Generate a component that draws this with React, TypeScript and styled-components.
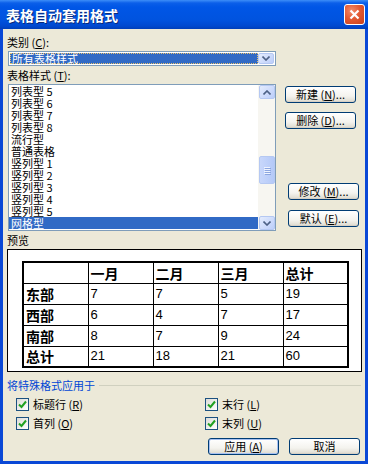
import styled, { createGlobalStyle } from 'styled-components';

const Global = createGlobalStyle`
  html, body { margin: 0; padding: 0; background: #fff; }
  body {
    font-family: "Noto Sans CJK SC", "Noto Sans", sans-serif;
    font-size: 11px;
    color: #000;
  }
`;

const Window = styled.div`
  width: 368px;
  height: 464px;
  display: flex;
  flex-direction: column;
  overflow: hidden;
`;

const TitleBar = styled.div`
  height: 29px;
  flex: none;
  display: flex;
  align-items: center;
  justify-content: space-between;
  padding: 0 3px 0 6px;
  background: linear-gradient(#3d8ef8 0, #0b5fe9 3px, #0056e6 7px, #0053df 20px, #0049cf 26px, #003fb9 29px);
`;

const Title = styled.span`
  color: #fff;
  font-weight: bold;
  font-size: 14px;
  line-height: 16px;
  text-shadow: 1px 1px 0 #0a2a7a;
`;

const CloseButton = styled.div`
  width: 19px;
  height: 19px;
  border: 1px solid #fff;
  border-radius: 3px;
  background: radial-gradient(circle at 35% 30%, #f28b6a 0, #e35a33 45%, #c7401b 100%);
  display: flex;
  align-items: center;
  justify-content: center;
`;

const Body = styled.div`
  flex: 1;
  background: #ece9d8;
  border: 3px solid #0a48d6;
  border-top: none;
  padding: 4px 2px 0 4px;
  display: flex;
  flex-direction: column;
`;

const Label = styled.div`
  height: 18px;
  line-height: 18px;
  flex: none;
`;

const Key = styled.span`
  text-decoration: underline;
`;

const Combo = styled.div`
  width: 268px;
  height: 15px;
  margin-left: 1px;
  box-sizing: border-box;
  border: 1px solid #7f9db9;
  background: #fff;
  display: flex;
  padding: 1px;
`;

const ComboValue = styled.div`
  flex: 1;
  background: #316ac5;
  color: #fff;
  outline: 1px dotted #e8c06a;
  outline-offset: -1px;
  line-height: 11px;
  padding-left: 2px;
`;

const ScrollBtn = styled.div`
  width: 16px;
  height: 14px;
  box-sizing: border-box;
  border: 1px solid #b5c8f2;
  border-radius: 2px;
  background: linear-gradient(135deg, #e4ecfd, #bccefa);
  display: flex;
  align-items: center;
  justify-content: center;
  flex: none;
`;

const ComboBtn = styled(ScrollBtn)`
  height: 11px;
`;

const ListRow = styled.div`
  display: flex;
  align-items: flex-start;
`;

const ListBox = styled.div`
  width: 268px;
  height: 147px;
  margin-left: 1px;
  box-sizing: border-box;
  border: 1px solid #7f9db9;
  background: #fff;
  display: flex;
  overflow: hidden;
`;

const Items = styled.div`
  flex: 1;
`;

const Item = styled.div<{ $selected?: boolean }>`
  height: 12px;
  line-height: 12px;
  padding-left: 2px;
  white-space: pre;
  background: ${p => (p.$selected ? '#316ac5' : 'transparent')};
  color: ${p => (p.$selected ? '#fff' : '#000')};
`;

const ScrollBar = styled.div`
  width: 17px;
  background: #f7f6f1;
  display: flex;
  flex-direction: column;
  align-items: center;
  padding: 0 0 0 1px;
  box-sizing: border-box;
`;

const Track = styled.div`
  flex: 1;
  display: flex;
  flex-direction: column;
  padding-top: 57px;
`;

const Thumb = styled.div`
  width: 16px;
  height: 28px;
  box-sizing: border-box;
  border: 1px solid #b5c8f2;
  border-radius: 2px;
  background: linear-gradient(90deg, #c8d7fb, #b4c9f8);
  display: flex;
  flex-direction: column;
  align-items: center;
  justify-content: center;
  gap: 1px;
`;

const Grip = styled.div`
  width: 6px;
  height: 1px;
  background: #eef3fe;
  box-shadow: 1px 1px 0 #8ca6e0;
`;

const SideButtons = styled.div`
  display: flex;
  flex-direction: column;
  margin-left: 9px;
  padding-top: 2px;
`;

const Button = styled.div<{ $default?: boolean; $gap?: number; $shift?: number }>`
  width: 71px;
  height: 17px;
  box-sizing: border-box;
  margin-top: ${p => p.$gap ?? 0}px;
  margin-left: ${p => p.$shift ?? 0}px;
  border: 1px solid #003c74;
  border-radius: 3px;
  background: linear-gradient(#ffffff, #f4f3ee 60%, #dcd9cd);
  box-shadow: ${p => (p.$default ? 'inset 0 0 0 1px #a7c1f1' : 'inset 0 -1px 0 #d6d0c5')};
  display: flex;
  align-items: center;
  justify-content: center;
  line-height: 13px;
  white-space: pre;
`;

const Preview = styled.div`
  width: 355px;
  height: 123px;
  box-sizing: border-box;
  border: 1px solid #000;
  background: #fff;
  padding: 11px 0 0 14px;
  overflow: hidden;
`;

const Table = styled.table`
  border-collapse: collapse;
  table-layout: fixed;
  width: 326px;
  border: 2px solid #000;
`;

const Cell = styled.td<{ $bold?: boolean }>`
  box-sizing: border-box;
  border: 1px solid #000;
  width: 65px;
  height: 21px;
  padding: 0 0 0 2px;
  font-size: ${p => (p.$bold ? '14px' : '13px')};
  font-weight: ${p => (p.$bold ? 'bold' : 'normal')};
  font-family: ${p => (p.$bold ? '"Noto Sans CJK SC", sans-serif' : '"Liberation Sans", sans-serif')};
  line-height: 16px;
  vertical-align: middle;
  overflow: hidden;
`;

const GroupHead = styled.div`
  height: 18px;
  margin-top: 4px;
  display: flex;
  align-items: center;
  gap: 4px;
  color: #0046d5;
  flex: none;
`;

const GroupLine = styled.div`
  flex: 1;
  height: 1px;
  background: #d0d0bf;
  margin-right: 2px;
`;

const CheckGrid = styled.div`
  display: grid;
  grid-template-columns: 189px auto;
  grid-auto-rows: 16px;
  row-gap: 3px;
  margin: 2px 0 0 9px;
`;

const CheckItem = styled.div`
  display: flex;
  align-items: center;
  gap: 4px;
`;

const Box = styled.div`
  width: 13px;
  height: 13px;
  box-sizing: border-box;
  border: 1px solid #1c5180;
  background: linear-gradient(135deg, #dcdcd7, #fff);
  display: flex;
  align-items: center;
  justify-content: center;
`;

const BottomRow = styled.div`
  display: flex;
  justify-content: flex-end;
  gap: 10px;
  margin: 7px 3px 0 0;
`;

const Chevron = ({ up }: { up?: boolean }) => (
  <svg width="8" height="5" viewBox="0 0 8 5">
    <path
      d={up ? 'M0.5 4.5 L4 1 L7.5 4.5' : 'M0.5 0.5 L4 4 L7.5 0.5'}
      fill="none"
      stroke="#4d6185"
      strokeWidth="1.6"
    />
  </svg>
);

const Check = () => (
  <svg width="9" height="9" viewBox="0 0 9 9">
    <path d="M1 4.5 L3.5 7 L8 1.5" fill="none" stroke="#21a121" strokeWidth="2" />
  </svg>
);

const items = [
  '列表型 5',
  '列表型 6',
  '列表型 7',
  '列表型 8',
  '流行型',
  '普通表格',
  '竖列型 1',
  '竖列型 2',
  '竖列型 3',
  '竖列型 4',
  '竖列型 5',
];

const rows = [
  ['东部', '7', '7', '5', '19'],
  ['西部', '6', '4', '7', '17'],
  ['南部', '8', '7', '9', '24'],
  ['总计', '21', '18', '21', '60'],
];

const checks = [
  ['标题行', 'R'],
  ['末行', 'L'],
  ['首列', 'O'],
  ['末列', 'U'],
];

export default function App() {
  return (
    <>
      <Global />
      <Window>
        <TitleBar>
          <Title>表格自动套用格式</Title>
          <CloseButton>
            <svg width="11" height="11" viewBox="0 0 11 11">
              <path d="M1.5 1.5 L9.5 9.5 M9.5 1.5 L1.5 9.5" stroke="#fff" strokeWidth="2.2" />
            </svg>
          </CloseButton>
        </TitleBar>
        <Body>
          <Label>
            类别 (<Key>C</Key>):
          </Label>
          <Combo>
            <ComboValue>所有表格样式</ComboValue>
            <ComboBtn>
              <Chevron />
            </ComboBtn>
          </Combo>
          <Label>
            表格样式 (<Key>T</Key>):
          </Label>
          <ListRow>
            <ListBox>
              <Items>
                {items.map(t => (
                  <Item key={t}>{t}</Item>
                ))}
                <Item $selected>网格型</Item>
              </Items>
              <ScrollBar>
                <ScrollBtn>
                  <Chevron up />
                </ScrollBtn>
                <Track>
                  <Thumb>
                    <Grip />
                    <Grip />
                    <Grip />
                    <Grip />
                  </Thumb>
                </Track>
                <ScrollBtn>
                  <Chevron />
                </ScrollBtn>
              </ScrollBar>
            </ListBox>
            <SideButtons>
              <Button>
                新建 (<Key>N</Key>)...
              </Button>
              <Button $gap={9}>
                删除 (<Key>D</Key>)...
              </Button>
              <Button $gap={54} $shift={3}>
                修改 (<Key>M</Key>)...
              </Button>
              <Button $gap={10} $shift={3}>
                默认 (<Key>E</Key>)...
              </Button>
            </SideButtons>
          </ListRow>
          <Label>预览</Label>
          <Preview>
            <Table>
              <tbody>
                <tr>
                  <Cell />
                  <Cell $bold>一月</Cell>
                  <Cell $bold>二月</Cell>
                  <Cell $bold>三月</Cell>
                  <Cell $bold>总计</Cell>
                </tr>
                {rows.map(r => (
                  <tr key={r[0]}>
                    {r.map((c, i) => (
                      <Cell key={i} $bold={i === 0}>
                        {c}
                      </Cell>
                    ))}
                  </tr>
                ))}
              </tbody>
            </Table>
          </Preview>
          <GroupHead>
            将特殊格式应用于
            <GroupLine />
          </GroupHead>
          <CheckGrid>
            {checks.map(([t, k]) => (
              <CheckItem key={t}>
                <Box>
                  <Check />
                </Box>
                <span>
                  {t} (<Key>{k}</Key>)
                </span>
              </CheckItem>
            ))}
          </CheckGrid>
          <BottomRow>
            <Button $default>
              应用 (<Key>A</Key>)
            </Button>
            <Button>取消</Button>
          </BottomRow>
        </Body>
      </Window>
    </>
  );
}
